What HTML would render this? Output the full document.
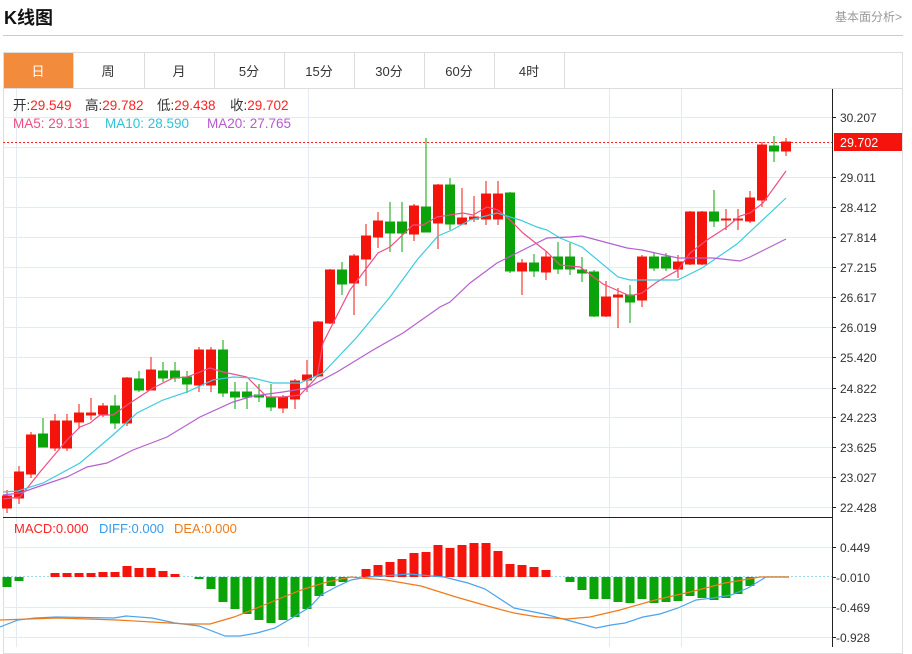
<!DOCTYPE html>
<html><head><meta charset="utf-8"><style>
body{margin:0;width:912px;height:647px;overflow:hidden;background:#fff;font-family:"Liberation Sans","Noto Sans CJK SC",sans-serif;position:relative}
.a{position:absolute;white-space:nowrap}
</style></head><body>
<div class="a" style="left:4px;top:4px;font-size:18px;font-weight:bold;color:#111">K线图</div>
<div class="a" style="left:835px;top:8px;font-size:12px;color:#999">基本面分析&gt;</div>
<div class="a" style="left:3px;top:35px;width:900px;height:1px;background:#ccc"></div>
<div class="a" style="left:3px;top:52px;width:898px;height:600px;border:1px solid #ddd"></div>
<svg class="a" style="left:0;top:0" width="912" height="647" font-family="Liberation Sans, Noto Sans CJK SC, sans-serif">
<rect x="4" y="53" width="69" height="35" fill="#f28c3c"/>
<g stroke="#ddd"><line x1="4" y1="88.5" x2="902" y2="88.5"/>
<line x1="73.5" y1="53" x2="73.5" y2="88"/><line x1="144.5" y1="53" x2="144.5" y2="88"/><line x1="214.5" y1="53" x2="214.5" y2="88"/><line x1="284.5" y1="53" x2="284.5" y2="88"/><line x1="354.5" y1="53" x2="354.5" y2="88"/><line x1="424.5" y1="53" x2="424.5" y2="88"/><line x1="494.5" y1="53" x2="494.5" y2="88"/><line x1="564.5" y1="53" x2="564.5" y2="88"/></g>
<g font-size="13" text-anchor="middle" fill="#333"><text x="38" y="76" fill="#fff">日</text><text x="108" y="76">周</text><text x="179" y="76">月</text><text x="249" y="76">5分</text><text x="319" y="76">15分</text><text x="389" y="76">30分</text><text x="459" y="76">60分</text><text x="529" y="76">4时</text></g>
<g stroke="#e4ebf2"><line x1="3" y1="117.5" x2="832" y2="117.5"/><line x1="3" y1="147.5" x2="832" y2="147.5"/><line x1="3" y1="177.5" x2="832" y2="177.5"/><line x1="3" y1="207.5" x2="832" y2="207.5"/><line x1="3" y1="237.5" x2="832" y2="237.5"/><line x1="3" y1="267.5" x2="832" y2="267.5"/><line x1="3" y1="297.5" x2="832" y2="297.5"/><line x1="3" y1="327.5" x2="832" y2="327.5"/><line x1="3" y1="357.5" x2="832" y2="357.5"/><line x1="3" y1="388.5" x2="832" y2="388.5"/><line x1="3" y1="417.5" x2="832" y2="417.5"/><line x1="3" y1="447.5" x2="832" y2="447.5"/><line x1="3" y1="477.5" x2="832" y2="477.5"/><line x1="3" y1="507.5" x2="832" y2="507.5"/>
<line x1="3" y1="547.5" x2="832" y2="547.5"/><line x1="3" y1="607.5" x2="832" y2="607.5"/><line x1="3" y1="637.5" x2="832" y2="637.5"/>
<line x1="16.5" y1="89" x2="16.5" y2="647"/><line x1="308.5" y1="89" x2="308.5" y2="647"/><line x1="609.5" y1="89" x2="609.5" y2="647"/><line x1="681.5" y1="89" x2="681.5" y2="647"/></g>
<g font-size="13.5" fill="#333"><text x="13" y="110">开:<tspan fill="#f22">29.549</tspan></text><text x="85" y="110">高:<tspan fill="#f22">29.782</tspan></text><text x="157" y="110">低:<tspan fill="#f22">29.438</tspan></text><text x="230" y="110">收:<tspan fill="#f22">29.702</tspan></text></g>
<g font-size="13.5"><text x="13" y="128" fill="#ee4f82">MA5: 29.131</text><text x="105" y="128" fill="#2fc2d8">MA10: 28.590</text><text x="207" y="128" fill="#b45bcf">MA20: 27.765</text></g>
<line x1="3" y1="142.5" x2="832" y2="142.5" stroke="#f22" stroke-dasharray="2,2"/>
<g fill="#f5140c" stroke="#f5140c">
<path d="M7 490V513M19 466V504M31 432V478M55 414V451M67 414V451M79 404V429M91 398V420M103 403V417M127 377V426M151 357V390M199 347V392M211 347V392M283 395V413M295 379V409M307 360V392M318 321V377M330 269V324M354 254V315M366 224V286M378 212V248M414 204V241M438 184V249M462 188V224M474 196V222M486 181V225M498 181V225M522 259V295M546 251V280M606 281V317M618 288V328M642 255V307M678 255V278M690 211V265M702 211V265M726 209V230M738 209V230M750 191V223M762 142V207M786 138V156" fill="none"/>
<rect x="2.5" y="496" width="9" height="12"/><rect x="14.5" y="472" width="9" height="26"/><rect x="26.5" y="435" width="9" height="39"/><rect x="50.5" y="421" width="9" height="27"/><rect x="62.5" y="421" width="9" height="27"/><rect x="74.5" y="413" width="9" height="9"/><rect x="86.5" y="413" width="9" height="2"/><rect x="98.5" y="406" width="9" height="8"/><rect x="122.5" y="378" width="9" height="45"/><rect x="146.5" y="370" width="9" height="20"/><rect x="194.5" y="350" width="9" height="35"/><rect x="206.5" y="350" width="9" height="35"/><rect x="278.5" y="397" width="9" height="11"/><rect x="290.5" y="381" width="9" height="18"/><rect x="302.5" y="375" width="9" height="5"/><rect x="313.5" y="322" width="9" height="54"/><rect x="325.5" y="270" width="9" height="53"/><rect x="349.5" y="256" width="9" height="27"/><rect x="361.5" y="236" width="9" height="23"/><rect x="373.5" y="221" width="9" height="16"/><rect x="409.5" y="206" width="9" height="28"/><rect x="433.5" y="185" width="9" height="38"/><rect x="457.5" y="218" width="9" height="6"/><rect x="469.5" y="217" width="9" height="2"/><rect x="481.5" y="194" width="9" height="25"/><rect x="493.5" y="194" width="9" height="25"/><rect x="517.5" y="263" width="9" height="8"/><rect x="541.5" y="257" width="9" height="15"/><rect x="601.5" y="297" width="9" height="19"/><rect x="613.5" y="295" width="9" height="2"/><rect x="637.5" y="257" width="9" height="43"/><rect x="673.5" y="262" width="9" height="7"/><rect x="685.5" y="212" width="9" height="52"/><rect x="697.5" y="212" width="9" height="52"/><rect x="721.5" y="219" width="9" height="1"/><rect x="733.5" y="219" width="9" height="1"/><rect x="745.5" y="198" width="9" height="23"/><rect x="757.5" y="145" width="9" height="55"/><rect x="781.5" y="142" width="9" height="9"/>
</g>
<g fill="#0aa30a" stroke="#0aa30a">
<path d="M43 418V447M115 395V429M139 371V392M163 362V382M175 362V382M187 371V393M223 340V397M235 382V409M247 382V409M259 384V402M271 384V411M342 262V295M390 202V252M402 202V252M426 138V232M450 178V230M510 192V273M534 254V277M558 242V274M570 243V275M582 257V282M594 270V317M630 285V323M654 253V271M666 253V271M714 190V227M774 136V162" fill="none"/>
<rect x="38.5" y="434" width="9" height="13"/><rect x="110.5" y="406" width="9" height="17"/><rect x="134.5" y="379" width="9" height="11"/><rect x="158.5" y="371" width="9" height="7"/><rect x="170.5" y="371" width="9" height="7"/><rect x="182.5" y="377" width="9" height="7"/><rect x="218.5" y="350" width="9" height="43"/><rect x="230.5" y="392" width="9" height="5"/><rect x="242.5" y="392" width="9" height="5"/><rect x="254.5" y="395" width="9" height="2"/><rect x="266.5" y="397" width="9" height="10"/><rect x="337.5" y="270" width="9" height="14"/><rect x="385.5" y="222" width="9" height="11"/><rect x="397.5" y="222" width="9" height="11"/><rect x="421.5" y="207" width="9" height="25"/><rect x="445.5" y="185" width="9" height="39"/><rect x="505.5" y="193" width="9" height="78"/><rect x="529.5" y="263" width="9" height="8"/><rect x="553.5" y="257" width="9" height="12"/><rect x="565.5" y="257" width="9" height="12"/><rect x="577.5" y="270" width="9" height="3"/><rect x="589.5" y="272" width="9" height="44"/><rect x="625.5" y="295" width="9" height="7"/><rect x="649.5" y="257" width="9" height="11"/><rect x="661.5" y="257" width="9" height="11"/><rect x="709.5" y="212" width="9" height="9"/><rect x="769.5" y="146" width="9" height="5"/>
</g>
<g fill="none" stroke-width="1.2">
<polyline stroke="#ee4f82" points="3,499 20,497 40,472 67,440 80,427 90,423 100,415 113,415 127,405 153,388 173,378 187,377 200,372 210,368 223,372 247,377 267,397 283,397 300,395 317,377 323,343 350,290 378,253 390,247 413,225 423,225 437,217 463,213 473,215 487,207 498,210 510,220 523,233 547,252 560,265 580,267 603,284 630,296 642,293 657,282 678,270 690,253 707,240 727,227 740,216 750,213 763,203 786,171"/>
<polyline stroke="#3ccbe0" points="3,492 18,491 43,483 80,463 113,435 137,413 163,400 187,392 213,380 233,377 253,378 273,383 300,383 323,373 357,337 390,297 417,260 438,236 452,230 470,220 497,213 520,220 537,227 547,230 560,238 582,247 618,277 630,280 678,280 702,268 737,244 786,198"/>
<polyline stroke="#b55fd0" points="3,495 20,493 43,485 67,477 87,467 107,463 133,450 167,437 200,417 233,402 253,396 283,392 307,388 337,372 373,350 403,333 440,307 450,302 470,283 497,263 523,250 547,238 570,237 582,236 627,248 642,250 678,258 713,258 740,261 750,257 786,239"/>
</g>
<line x1="3" y1="517.5" x2="832" y2="517.5" stroke="#222"/>
<g font-size="13"><text x="14" y="533" fill="#f22">MACD:0.000</text><text x="99" y="533" fill="#3b9ae8">DIFF:0.000</text><text x="174" y="533" fill="#f07a1a">DEA:0.000</text></g>
<line x1="3" y1="576.5" x2="832" y2="576.5" stroke="#9fd8ea" stroke-dasharray="2,2"/>
<g fill="#f5140c">
<rect x="50.5" y="573" width="9" height="4"/><rect x="62.5" y="573" width="9" height="4"/><rect x="74.5" y="573" width="9" height="4"/><rect x="86.5" y="573" width="9" height="4"/><rect x="98.5" y="572" width="9" height="5"/><rect x="110.5" y="572" width="9" height="5"/><rect x="122.5" y="566" width="9" height="11"/><rect x="134.5" y="568" width="9" height="9"/><rect x="146.5" y="568" width="9" height="9"/><rect x="158.5" y="571" width="9" height="6"/><rect x="170.5" y="574" width="9" height="3"/>
<rect x="361.5" y="569" width="9" height="8"/><rect x="373.5" y="565" width="9" height="12"/><rect x="385.5" y="562" width="9" height="15"/><rect x="397.5" y="559" width="9" height="18"/><rect x="409.5" y="553" width="9" height="24"/><rect x="421.5" y="552" width="9" height="25"/><rect x="433.5" y="545" width="9" height="32"/><rect x="445.5" y="548" width="9" height="29"/><rect x="457.5" y="545" width="9" height="32"/><rect x="469.5" y="543" width="9" height="34"/><rect x="481.5" y="543" width="9" height="34"/><rect x="493.5" y="551" width="9" height="26"/><rect x="505.5" y="564" width="9" height="13"/><rect x="517.5" y="565" width="9" height="12"/><rect x="529.5" y="567" width="9" height="10"/><rect x="541.5" y="570" width="9" height="7"/>
</g>
<g fill="#0aa30a">
<rect x="2.5" y="577" width="9" height="10"/><rect x="14.5" y="577" width="9" height="4"/><rect x="194.5" y="577" width="9" height="2"/><rect x="206.5" y="577" width="9" height="12"/><rect x="218.5" y="577" width="9" height="25"/><rect x="230.5" y="577" width="9" height="32"/><rect x="242.5" y="577" width="9" height="37"/><rect x="254.5" y="577" width="9" height="43"/><rect x="266.5" y="577" width="9" height="46"/><rect x="278.5" y="577" width="9" height="43"/><rect x="290.5" y="577" width="9" height="40"/><rect x="302.5" y="577" width="9" height="32"/><rect x="314.5" y="577" width="9" height="19"/><rect x="326.5" y="577" width="9" height="9"/><rect x="338.5" y="577" width="9" height="5"/>
<rect x="565.5" y="577" width="9" height="5"/><rect x="577.5" y="577" width="9" height="13"/><rect x="589.5" y="577" width="9" height="22"/><rect x="601.5" y="577" width="9" height="22"/><rect x="613.5" y="577" width="9" height="25"/><rect x="625.5" y="577" width="9" height="26"/><rect x="637.5" y="577" width="9" height="22"/><rect x="649.5" y="577" width="9" height="26"/><rect x="661.5" y="577" width="9" height="25"/><rect x="673.5" y="577" width="9" height="24"/><rect x="685.5" y="577" width="9" height="19"/><rect x="697.5" y="577" width="9" height="21"/><rect x="709.5" y="577" width="9" height="23"/><rect x="721.5" y="577" width="9" height="21"/><rect x="733.5" y="577" width="9" height="17"/><rect x="745.5" y="577" width="9" height="9"/>
</g>
<g fill="none" stroke-width="1.2">
<polyline stroke="#4aa3f0" points="0,627 18,620 35,618 56,617 114,618 126,616 152,618 175,623 199,626 225,636 240,636 257,633 275,628 292,618 310,607 321,595 336,587 351,580 368,577 409,574 444,577 468,583 485,589 514,608 544,614 567,620 596,628 611,625 625,623 643,617 660,614 678,608 696,600 713,598 731,595 748,588 766,577 789,577"/>
<polyline stroke="#f07a1a" points="0,620 58,618 117,620 152,622 187,624 210,624 234,617 257,608 281,598 304,589 327,582 351,577 362,578 386,580 421,586 456,597 491,607 514,613 538,617 567,619 590,617 620,610 655,600 690,592 725,583 760,577 789,577"/>
</g>
<line x1="832.5" y1="89" x2="832.5" y2="647" stroke="#222"/>
<g stroke="#222"><path d="M832 117.5h4M832 177.5h4M832 207.5h4M832 237.5h4M832 267.5h4M832 297.5h4M832 327.5h4M832 357.5h4M832 388.5h4M832 417.5h4M832 447.5h4M832 477.5h4M832 507.5h4M832 547.5h4M832 577.5h4M832 607.5h4M832 637.5h4"/></g>
<g font-size="12" fill="#333"><text x="840" y="122">30.207</text><text x="840" y="182">29.011</text><text x="840" y="212">28.412</text><text x="840" y="242">27.814</text><text x="840" y="272">27.215</text><text x="840" y="302">26.617</text><text x="840" y="332">26.019</text><text x="840" y="362">25.420</text><text x="840" y="393">24.822</text><text x="840" y="422">24.223</text><text x="840" y="452">23.625</text><text x="840" y="482">23.027</text><text x="840" y="512">22.428</text>
<text x="840" y="552">0.449</text><text x="836" y="582">-0.010</text><text x="836" y="612">-0.469</text><text x="836" y="642">-0.928</text></g>
<rect x="834" y="133" width="68" height="18" fill="#f5140c"/>
<text x="840" y="147" font-size="12.5" fill="#fff">29.702</text>
</svg>
</body></html>
